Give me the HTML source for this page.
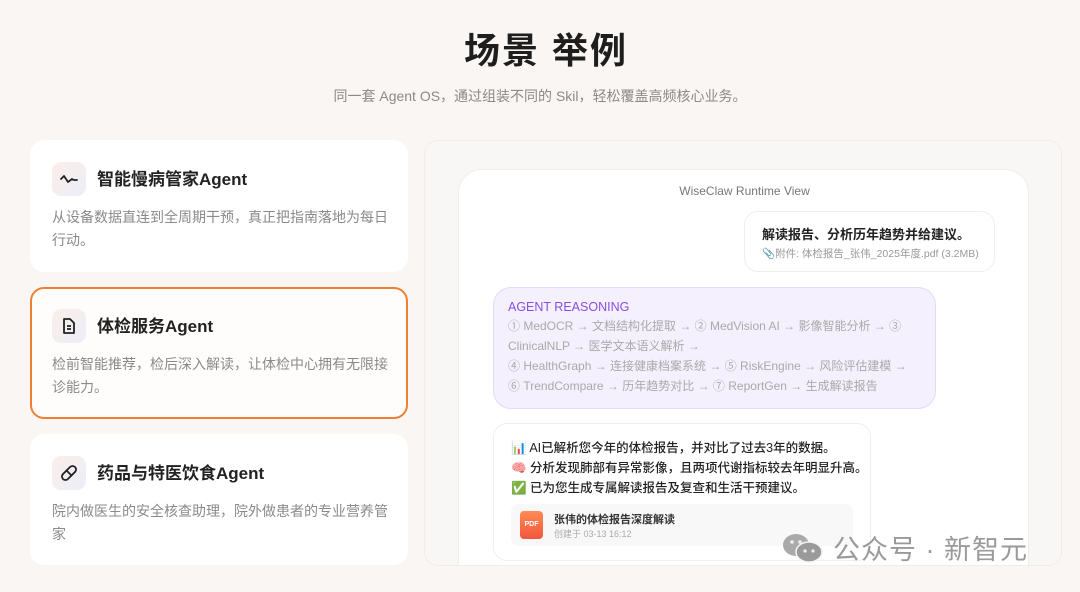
<!DOCTYPE html>
<html><head><meta charset="utf-8"><style>
*{box-sizing:border-box;margin:0;padding:0}
body{width:1080px;height:592px;overflow:hidden;background:#f9f6f3;font-family:"Liberation Sans","Noto Sans CJK SC",sans-serif;color:#222;position:relative}
.abs{position:absolute}
h1{position:absolute;top:22px;left:6px;width:1080px;text-align:center;font-size:36px;font-weight:700;letter-spacing:2px;color:#1e1e1e}
.sub{top:86px;left:0;width:1080px;text-align:center;font-size:14px;color:#8a8a8a}
.card{position:absolute;left:30px;width:378px;background:#fff;border-radius:14px}
.ic{position:absolute;left:22px;top:22px;width:34px;height:34px;border-radius:9px;background:linear-gradient(135deg,#fbeee8,#eceefa);display:flex;align-items:center;justify-content:center}
.ct{position:absolute;left:67px;top:25px;font-size:17px;font-weight:700;color:#222}
.cd{position:absolute;left:22px;top:66px;width:336px;font-size:14px;line-height:23px;color:#8a8a8a}
.rs{font-size:12px;line-height:20px;color:#aaa;margin-top:2px;white-space:nowrap}
</style></head><body>
<h1>场景 举例</h1>
<div class="abs sub">同一套 Agent OS，通过组装不同的 Skil，轻松覆盖高频核心业务。</div>

<div class="card" style="top:140px;height:132px">
<div class="ic"><svg width="20" height="20" viewBox="0 0 20 20" fill="none" stroke="#222" stroke-width="1.8" stroke-linecap="round" stroke-linejoin="round"><path d="M2 10 L5 7 L9 13 L13 10 L15 11 L18 11"/></svg></div>
<div class="ct">智能慢病管家Agent</div>
<div class="cd">从设备数据直连到全周期干预，真正把指南落地为每日行动。</div></div>

<div class="card" style="top:287px;height:132px;border:2px solid #ef7f32;background:#fffdfc">
<div class="ic" style="left:20px;top:20px"><svg width="18" height="18" viewBox="0 0 18 18" fill="none" stroke="#222" stroke-width="1.8" stroke-linejoin="round"><path d="M4 2h6l4 4v10H4z"/><path d="M7 9h4M7 12h4"/></svg></div>
<div class="ct" style="left:65px;top:23px">体检服务Agent</div>
<div class="cd" style="left:20px;top:64px">检前智能推荐，检后深入解读，让体检中心拥有无限接诊能力。</div></div>

<div class="card" style="top:434px;height:131px">
<div class="ic"><svg width="20" height="20" viewBox="0 0 20 20" fill="none" stroke="#222" stroke-width="1.8"><rect x="1.5" y="6.5" width="17" height="7" rx="3.5" transform="rotate(-45 10 10)"/><path d="M7.5 7.5l5 5"/></svg></div>
<div class="ct">药品与特医饮食Agent</div>
<div class="cd">院内做医生的安全核查助理，院外做患者的专业营养管家</div></div>

<div class="abs" style="left:424px;top:140px;width:638px;height:426px;background:#f8f7f5;border-radius:14px;border:1px solid #f0ede9;overflow:hidden">
<div class="abs" style="left:33px;top:28px;width:571px;height:420px;background:#fff;border-radius:24px;border:1px solid #f0eeec">
<div class="abs" style="top:14px;left:0;width:571px;text-align:center;font-size:12px;color:#777">WiseClaw Runtime View</div>
<div class="abs" style="left:285px;top:41px;width:251px;height:61px;border:1px solid #eee;border-radius:14px;padding:12px 0 0 17px">
<div style="font-size:13px;font-weight:700;color:#222">解读报告、分析历年趋势并给建议。</div>
<div style="font-size:10.5px;color:#999;margin-top:3px">📎附件: 体检报告_张伟_2025年度.pdf (3.2MB)</div></div>
<div class="abs" style="left:34px;top:117px;width:443px;height:122px;background:#f4f0fd;border:1px solid #e2daf6;border-radius:18px;padding:12px 14px">
<div style="font-size:12.5px;color:#8a4fe0;font-weight:500">AGENT REASONING</div>
<div class="rs">① MedOCR → 文档结构化提取 → ② MedVision AI → 影像智能分析 → ③<br>ClinicalNLP → 医学文本语义解析 →<br>④ HealthGraph → 连接健康档案系统 → ⑤ RiskEngine → 风险评估建模 →<br>⑥ TrendCompare → 历年趋势对比 → ⑦ ReportGen → 生成解读报告</div></div>
<div class="abs" style="left:34px;top:253px;width:378px;height:138px;border:1px solid #eee;border-radius:14px;padding:14px 0 0 17px">
<div style="font-size:12.5px;line-height:20px;color:#222;font-weight:500;white-space:nowrap">📊 AI已解析您今年的体检报告，并对比了过去3年的数据。<br>🧠 分析发现肺部有异常影像，且两项代谢指标较去年明显升高。<br>✅ 已为您生成专属解读报告及复查和生活干预建议。</div>
<div class="abs" style="left:17px;top:80px;width:342px;height:42px;background:#f8f8f9;border-radius:8px">
<div class="abs" style="left:9px;top:7px;width:23px;height:28px;background:linear-gradient(#ff8a55,#f2553c);border-radius:4px;color:#fff;font-size:7px;font-weight:700;text-align:center;line-height:28px">PDF</div>
<div class="abs" style="left:43px;top:7px;font-size:11px;font-weight:700;color:#333">张伟的体检报告深度解读</div>
<div class="abs" style="left:43px;top:23px;font-size:9px;color:#aaa">创建于 03-13 16:12</div></div></div>
</div></div>

<div class="abs" style="left:781px;top:528px;display:flex;align-items:center;gap:8px;color:#9a9a9a">
<svg width="44" height="30" viewBox="0 0 44 30"><ellipse cx="15" cy="12" rx="13" ry="11" fill="#aaa"/><ellipse cx="28" cy="19" rx="13" ry="10" fill="#9a9a9a" stroke="#f4f4f4" stroke-width="1.5"/><circle cx="11" cy="9" r="1.8" fill="#eee"/><circle cx="19" cy="9" r="1.8" fill="#eee"/><circle cx="24" cy="18" r="1.6" fill="#eee"/><circle cx="32" cy="18" r="1.6" fill="#eee"/></svg>
<span style="font-size:27px;letter-spacing:1px">公众号 · 新智元</span></div>
</body></html>
